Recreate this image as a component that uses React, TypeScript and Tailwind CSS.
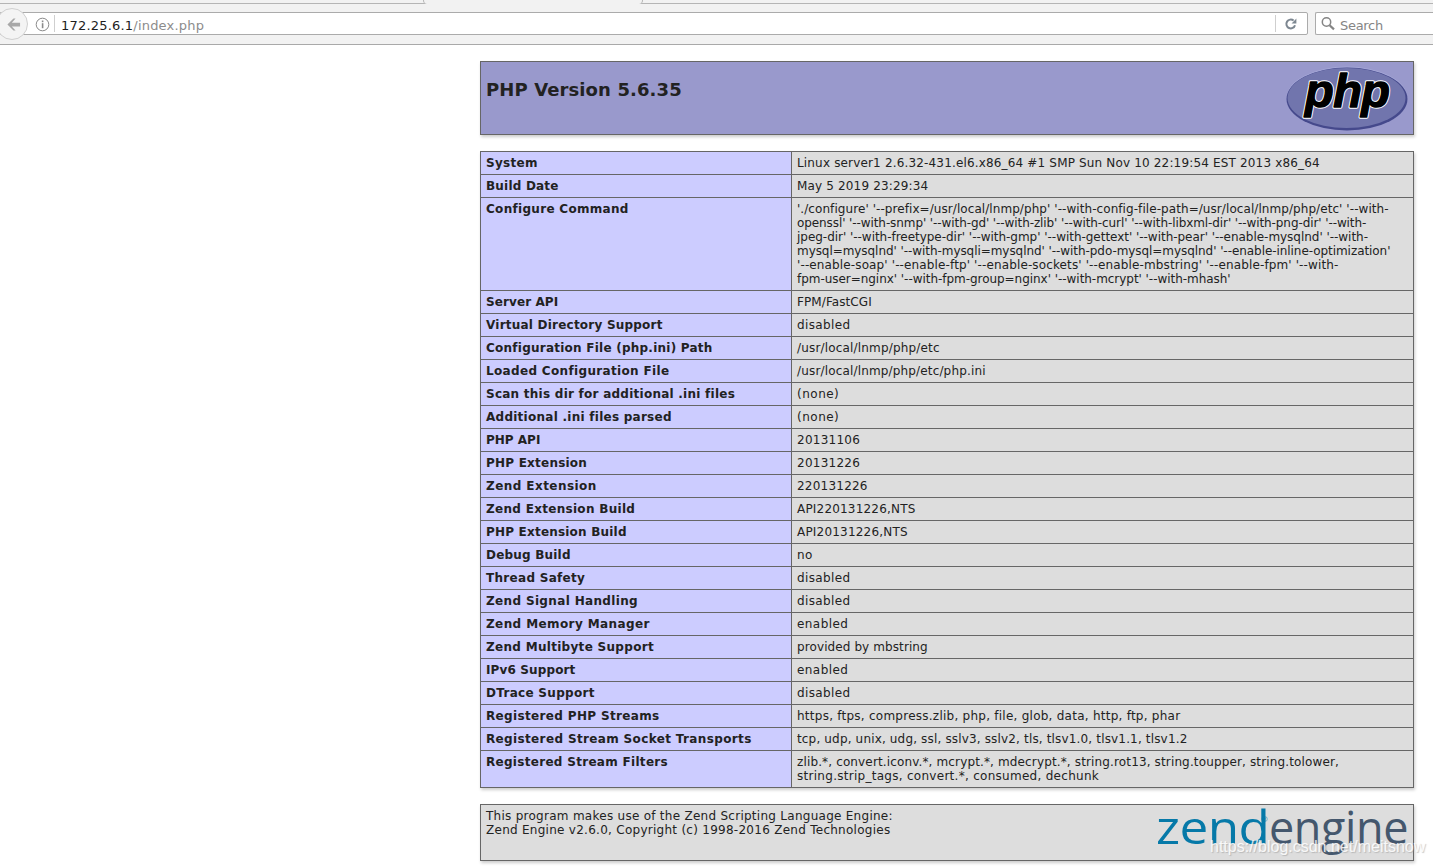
import React from "react";

type Line = [string, string];
const rows: [string, string, Line[]][] = [
  ["System", "tracking-[0.3px]", [["Linux server1 2.6.32-431.el6.x86_64 #1 SMP Sun Nov 10 22:19:54 EST 2013 x86_64", "tracking-[0.165px]"]]],
  ["Build Date", "tracking-[0.2px]", [["May 5 2019 23:29:34", "tracking-[0.16px]"]]],
  ["Configure Command", "tracking-[0.3px]", [
    ["'./configure' '--prefix=/usr/local/lnmp/php' '--with-config-file-path=/usr/local/lnmp/php/etc' '--with-", "tracking-[0.07px]"],
    ["openssl' '--with-snmp' '--with-gd' '--with-zlib' '--with-curl' '--with-libxml-dir' '--with-png-dir' '--with-", "tracking-[-0.09px]"],
    ["jpeg-dir' '--with-freetype-dir' '--with-gmp' '--with-gettext' '--with-pear' '--enable-mysqlnd' '--with-", "tracking-[-0.03px]"],
    ["mysql=mysqlnd' '--with-mysqli=mysqlnd' '--with-pdo-mysql=mysqlnd' '--enable-inline-optimization'", "tracking-[-0.06px]"],
    ["'--enable-soap' '--enable-ftp' '--enable-sockets' '--enable-mbstring' '--enable-fpm' '--with-", "tracking-[0.13px]"],
    ["fpm-user=nginx' '--with-fpm-group=nginx' '--with-mcrypt' '--with-mhash'", "tracking-[-0.04px]"],
  ]],
  ["Server API", "tracking-[0.1px]", [["FPM/FastCGI", "tracking-[0.09px]"]]],
  ["Virtual Directory Support", "tracking-[0.22px]", [["disabled", "tracking-[0.37px]"]]],
  ["Configuration File (php.ini) Path", "tracking-[0.24px]", [["/usr/local/lnmp/php/etc", "tracking-[0.17px]"]]],
  ["Loaded Configuration File", "tracking-[0.34px]", [["/usr/local/lnmp/php/etc/php.ini", "tracking-[0.16px]"]]],
  ["Scan this dir for additional .ini files", "tracking-[0.25px]", [["(none)", "tracking-[0.5px]"]]],
  ["Additional .ini files parsed", "tracking-[0.26px]", [["(none)", "tracking-[0.5px]"]]],
  ["PHP API", "tracking-[0px]", [["20131106", "tracking-[0.25px]"]]],
  ["PHP Extension", "tracking-[0.22px]", [["20131226", "tracking-[0.25px]"]]],
  ["Zend Extension", "tracking-[0.44px]", [["220131226", "tracking-[0.22px]"]]],
  ["Zend Extension Build", "tracking-[0.3px]", [["API220131226,NTS", "tracking-[0.19px]"]]],
  ["PHP Extension Build", "tracking-[0.2px]", [["API20131226,NTS", "tracking-[0.2px]"]]],
  ["Debug Build", "tracking-[0.2px]", [["no", "tracking-[0.3px]"]]],
  ["Thread Safety", "tracking-[0.3px]", [["disabled", "tracking-[0.37px]"]]],
  ["Zend Signal Handling", "tracking-[0.35px]", [["disabled", "tracking-[0.37px]"]]],
  ["Zend Memory Manager", "tracking-[0.4px]", [["enabled", "tracking-[0.43px]"]]],
  ["Zend Multibyte Support", "tracking-[0.3px]", [["provided by mbstring", "tracking-[0.1px]"]]],
  ["IPv6 Support", "tracking-[0.13px]", [["enabled", "tracking-[0.43px]"]]],
  ["DTrace Support", "tracking-[0.3px]", [["disabled", "tracking-[0.37px]"]]],
  ["Registered PHP Streams", "tracking-[0.35px]", [["https, ftps, compress.zlib, php, file, glob, data, http, ftp, phar", "tracking-[0.25px]"]]],
  ["Registered Stream Socket Transports", "tracking-[0.36px]", [["tcp, udp, unix, udg, ssl, sslv3, sslv2, tls, tlsv1.0, tlsv1.1, tlsv1.2", "tracking-[0.16px]"]]],
  ["Registered Stream Filters", "tracking-[0.3px]", [
    ["zlib.*, convert.iconv.*, mcrypt.*, mdecrypt.*, string.rot13, string.toupper, string.tolower,", "tracking-[0.14px]"],
    ["string.strip_tags, convert.*, consumed, dechunk", "tracking-[0.28px]"],
  ]],
];

function PhpLogo() {
  return (
    <svg width="122" height="65" viewBox="0 0 122 65">
      <ellipse cx="61" cy="32" rx="60.5" ry="31.5" fill="#a4a6d6" />
      <ellipse cx="61" cy="33" rx="60.5" ry="31.5" fill="#45498c" />
      <ellipse cx="60.5" cy="32" rx="59" ry="30" fill="#7175ad" />
      <g fontFamily="'Liberation Sans', sans-serif" fontSize="47" fontWeight="700" fontStyle="italic">
        <text x="19" y="41" textLength="85" lengthAdjust="spacing" fill="#fff" stroke="#fff" strokeWidth="3.4" strokeLinejoin="round">php</text>
        <text x="19" y="41" textLength="85" lengthAdjust="spacing" fill="#000" stroke="#000" strokeWidth="1.4" strokeLinejoin="round">php</text>
      </g>
    </svg>
  );
}

function ZendLogo() {
  return (
    <div className="relative h-[55px] w-[252px] font-['Open_Sans','DejaVu_Sans',sans-serif] leading-none">
      <span className="absolute left-0 top-[-5px] origin-left scale-x-[1.14] text-[45px] font-medium tracking-[-0.5px] text-[#0679a8]">zend</span>
      <span className="absolute left-[105px] top-[6px] text-[8px] text-[#0679a8]">®</span>
      <span className="absolute left-[113px] top-[-5px] text-[45px] tracking-[-0.4px] text-[#44576d]">engine</span>
    </div>
  );
}

export default function App() {
  return (
    <div className="h-[866px] w-[1433px] overflow-hidden bg-white font-['DejaVu_Sans',sans-serif] text-[#222]">
      <div className="relative h-[45px] border-b border-[#a9a9a9] bg-[#f2f2f2]">
        <div className="h-[4px] border-b border-[#b5b5b5]">
          <div className="absolute left-[423px] top-0 h-[4px] w-[220px] rounded-b-[5px] border-x border-[#b5b5b5] bg-[#f2f2f2]" />
        </div>
        <div className="flex items-start pt-[8px]">
          <div className="flex h-[23px] w-[1308px] items-center rounded-r-[2px] border border-[#ababab] bg-white pl-[34px] pr-[9px]">
            <svg width="15" height="15" viewBox="0 0 15 15" className="mt-[1px] shrink-0 text-[#8a8a8a]">
              <circle cx="7.5" cy="7.5" r="6.3" fill="none" stroke="currentColor" />
              <rect x="6.8" y="3.5" width="1.6" height="1.7" fill="currentColor" />
              <rect x="6.8" y="6.2" width="1.6" height="5" fill="currentColor" />
            </svg>
            <div className="ml-[4px] h-[17px] w-px bg-[#cfcfcf]" />
            <div className="ml-[6px] mt-[4px] text-[13px] tracking-[0.2px]">
              <span className="text-[#1e1e1e]">172.25.6.1</span>
              <span className="text-[#8c8c8c]">/index.php</span>
            </div>
            <div className="ml-auto h-[17px] w-px bg-[#cfcfcf]" />
            <svg width="14" height="14" viewBox="0 0 14 14" className="ml-[8px] mt-[1px] text-[#7d8791]">
              <path d="M11 8.2A4.4 4.4 0 1 1 9.6 3.6" fill="none" stroke="currentColor" strokeWidth="2" />
              <path d="M7.6 6.4 12.4 6.4 12.4 1.6Z" fill="currentColor" />
            </svg>
          </div>
          <div className="ml-[7px] flex h-[23px] flex-1 items-center rounded-l-[2px] border border-r-0 border-[#ababab] bg-white pl-[4px]">
            <svg width="16" height="16" viewBox="0 0 16 16" className="text-[#858585]">
              <circle cx="6.5" cy="6" r="4.2" fill="none" stroke="currentColor" strokeWidth="1.5" />
              <path d="M9.6 9.2 14 13.4" stroke="currentColor" strokeWidth="2.2" />
            </svg>
            <span className="ml-[4px] mt-[4px] text-[13px] tracking-[-0.3px] text-[#858585]">Search</span>
          </div>
        </div>
        <div className="absolute -left-[4px] top-[8px] flex h-[32px] w-[32px] items-center justify-center rounded-full border border-[#d0d0d0] bg-[#f4f4f4]">
          <svg width="15" height="15" viewBox="0 0 16 16" className="ml-[2px] text-[#a8a8a8]">
            <path d="M8 1.5 1.5 8 8 14.5 10.2 14.5 6.2 10 15 10 15 6 6.2 6 10.2 1.5Z" fill="currentColor" />
          </svg>
        </div>
      </div>

      <div className="ml-[480px] w-[934px] pt-[16px] text-[12px] leading-[14px]">
        <div className="flex h-[74px] justify-between border border-[#666] bg-[#9999cc] pl-[5px] pr-[5px] shadow-[1px_2px_3px_#ccc]">
          <h1 className="pt-[15px] text-[18px] font-bold leading-[25px] tracking-[0.11px] text-[#222]">PHP Version 5.6.35</h1>
          <div className="pt-[4px]"><PhpLogo /></div>
        </div>

        <table className="mt-[16px] w-[934px] table-fixed border-collapse shadow-[1px_2px_3px_#ccc]">
          <colgroup>
            <col className="w-[311px]" />
            <col />
          </colgroup>
          <tbody>
            {rows.map(([k, kt, lines]) => (
              <tr key={k}>
                <td className={"border border-[#666] bg-[#ccccff] px-[5px] py-[4px] align-baseline font-bold text-[#222] " + kt}>{k}</td>
                <td className="whitespace-nowrap border border-[#666] bg-[#dddddd] px-[5px] py-[4px] align-baseline text-[#222]">
                  {lines.map(([l, t]) => <div key={l} className={t}>{l}</div>)}
                </td>
              </tr>
            ))}
          </tbody>
        </table>

        <div className="mt-[16px] flex h-[57px] justify-between border border-[#666] bg-[#dddddd] pl-[5px] pr-[5px] pt-[4px] tracking-[0.27px] shadow-[1px_2px_3px_#ccc]">
          <div>
            <div>This program makes use of the Zend Scripting Language Engine:</div>
            <div>Zend Engine v2.6.0, Copyright (c) 1998-2016 Zend Technologies</div>
          </div>
          <ZendLogo />
        </div>
      </div>

      <div className="absolute left-[1210px] top-[838px] whitespace-nowrap font-['Liberation_Sans',sans-serif] text-[16px] leading-[18px] text-white/85 [text-shadow:1px_1px_1px_rgba(140,140,140,0.45)]">https://blog.csdn.net/meitsnow</div>
    </div>
  );
}
